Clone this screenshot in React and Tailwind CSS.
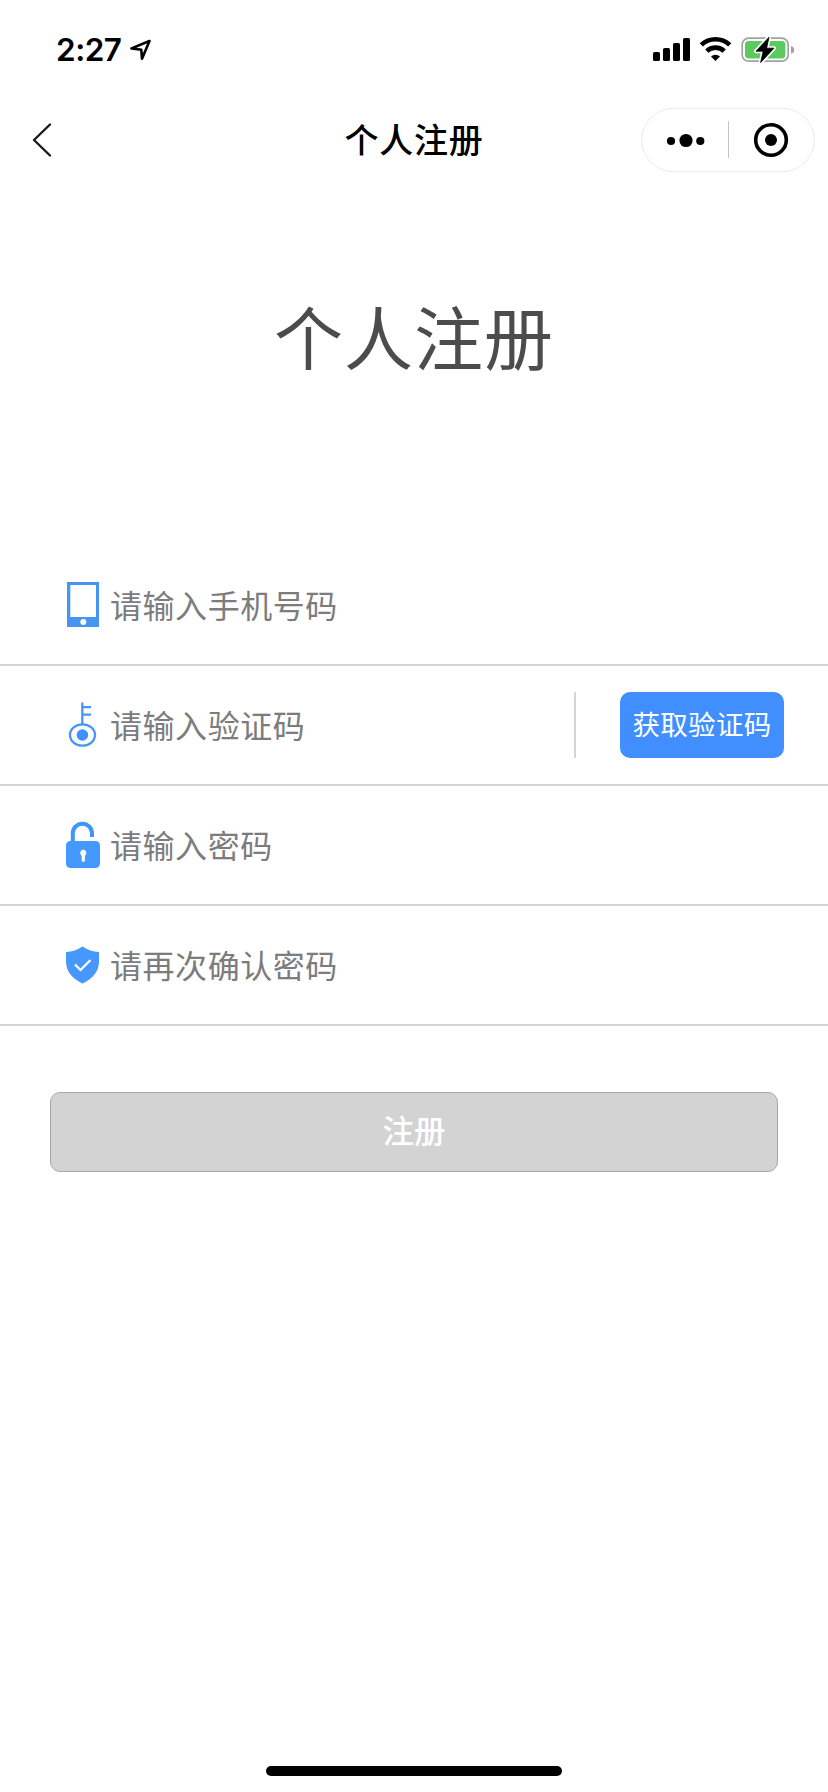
function StatusBar() {
  return (
    <div className="flex h-[100px] items-center justify-between pl-14 pr-[33px]">
      <div className="flex items-center gap-[9px]">
        <span className="font-['Inter',sans-serif] text-[31.5px] leading-[38px] font-semibold tracking-[-0.5px]">2:27</span>
        <svg className="h-[22px] w-[22px]" viewBox="0 0 22 22" fill="none" stroke="#000" strokeWidth="2.6" strokeLinejoin="round">
          <path d="M19.5 2 1.5 9.4 11.3 10.8 12 19.7Z" />
        </svg>
      </div>
      <svg className="h-[28px] w-[142px]" viewBox="0 0 142 28">
        <rect x="0" y="16" width="7" height="9" rx="1.6" />
        <rect x="10" y="12" width="7" height="13" rx="1.6" />
        <rect x="20" y="7" width="7" height="18" rx="1.6" />
        <rect x="30" y="2" width="7" height="23" rx="1.6" />
        <g fill="none" stroke="#000" strokeWidth="4.6">
          <path d="M48.3 8.9a20.6 20.6 0 0 1 28.4 0" />
          <path d="M53.8 15.1a12.6 12.6 0 0 1 17.4 0" />
        </g>
        <path d="M62.5 25 58 20.6a6.6 6.6 0 0 1 9 0Z" />
        <rect x="89.2" y="2.2" width="46" height="23" rx="6.5" fill="none" stroke="#a2a2a5" strokeWidth="1.7" />
        <rect x="92" y="5" width="40.4" height="17.4" rx="3.6" fill="#5bcb60" />
        <path d="M138 10q3.2 1 3.2 3.9t-3.2 3.9Z" fill="#a2a2a5" />
        <path d="M116 1.2 103 15.2h7.2L107.6 26.6 121 12.2h-7.4Z" stroke="#fff" strokeWidth="4" strokeLinejoin="round" fill="#fff" />
        <path d="M116 1.2 103 15.2h7.2L107.6 26.6 121 12.2h-7.4Z" stroke="#000" strokeWidth="0.8" strokeLinejoin="round" />
      </svg>
    </div>
  );
}

function NavBar() {
  return (
    <header className="grid h-20 grid-cols-[187px_1fr_187px] items-center">
      <svg className="ml-8 h-9 w-5" viewBox="0 0 20 36" fill="none" stroke="#1a1a1a" strokeWidth="2.4" strokeLinecap="round" strokeLinejoin="round">
        <path d="M18 2.5 2 18 18 33.5" />
      </svg>
      <h1 className="mb-0.5 text-center text-[34px] leading-[48px] font-medium tracking-[0.7px]">个人注册</h1>
      <div className="flex h-16 w-[174px] items-center rounded-full border border-[#ebebeb]">
        <svg className="h-[62px] w-[172px]" viewBox="0 0 172 62">
          <circle cx="29" cy="32" r="4.1" />
          <circle cx="44" cy="31.5" r="6.6" />
          <circle cx="58.3" cy="32" r="4.1" />
          <path d="M86.5 12V49" stroke="#c4c4c4" strokeWidth="1" />
          <circle cx="129" cy="31" r="15.3" fill="none" stroke="#000" strokeWidth="3.6" />
          <circle cx="129" cy="31" r="6" />
        </svg>
      </div>
    </header>
  );
}

function PhoneIcon() {
  return (
    <svg className="mb-0.5 h-12 w-9" viewBox="0 0 36 48">
      <path d="M2 2H34V47H2ZM5.3 5V37H31V5Z" fill="#4695f2" fillRule="evenodd" />
      <circle cx="18.3" cy="42" r="3" fill="#fff" />
    </svg>
  );
}

function KeyIcon() {
  return (
    <svg className="mb-0.5 h-12 w-9" viewBox="0 0 36 48" fill="none" stroke="#4896f6" strokeWidth="2.3">
      <path d="M17.3 2.5V24M17.3 7.2H26M17.3 14.7H26" />
      <ellipse cx="17.5" cy="35" rx="12.5" ry="10.7" />
      <circle cx="17.4" cy="35" r="5.8" fill="#3f91fb" stroke="none" />
    </svg>
  );
}

function LockIcon() {
  return (
    <svg className="mb-0.5 h-12 w-9" viewBox="0 0 36 48">
      <path d="M7.8 24V13.3a9.6 9.6 0 0 1 19.2 0V17" fill="none" stroke="#4096f8" strokeWidth="4" />
      <rect x="1" y="21" width="34" height="27" rx="4.5" fill="#4499fe" />
      <path d="M18 29.5a3.6 3.6 0 0 1 1.9 6.5V40.2a1.6 1.6 0 0 1-3.2 0V36A3.6 3.6 0 0 1 18 29.5Z" fill="#fff" />
    </svg>
  );
}

function ShieldIcon() {
  return (
    <svg className="mb-0.5 h-12 w-9" viewBox="0 0 36 48">
      <path d="M17.5 6.5Q25 11.5 34 12V22Q33.5 36 17.5 43.5 1.5 36 1 22V12Q10 11.5 17.5 6.5Z" fill="#4798fd" />
      <path d="M10 24.5 15.5 30 25.5 20" fill="none" stroke="#fff" strokeWidth="2.2" />
    </svg>
  );
}

function Field({ icon, label, children }) {
  return (
    <div className="flex h-[120px] items-center border-b-2 border-[#d5d5d5] pl-[65px] pr-11">
      {icon}
      <span className="mb-[3px] ml-[9px] text-[32px] leading-[46px] tracking-[0.55px] text-[#7c7c7c]">{label}</span>
      {children}
    </div>
  );
}

export default function App() {
  return (
    <div className="flex h-[1792px] w-[828px] flex-col bg-white font-['Noto_Sans_CJK_SC',sans-serif] text-black">
      <StatusBar />
      <NavBar />
      <main className="flex flex-col">
        <h2 className="mt-[105px] text-center text-[69px] leading-[100px] tracking-[1px] text-[#4c4c4c]">个人注册</h2>
        <div className="mt-[161px]">
          <Field icon={<PhoneIcon />} label="请输入手机号码" />
          <Field icon={<KeyIcon />} label="请输入验证码">
            <div className="ml-auto flex items-center gap-11">
              <div className="h-[66px] w-0.5 bg-[#d5d5d5]" />
              <button className="h-[66px] w-[164px] rounded-[10px] bg-[#418fff] pb-1 text-[27.5px] leading-[62px] tracking-[0.3px] text-white">获取验证码</button>
            </div>
          </Field>
          <Field icon={<LockIcon />} label="请输入密码" />
          <Field icon={<ShieldIcon />} label="请再次确认密码" />
        </div>
        <button className="mx-[50px] mt-[66px] h-20 rounded-[10px] border border-[#a8a8a8] bg-[#d3d3d3] pb-1 text-[31.5px] font-medium text-white">注册</button>
      </main>
      <div className="mx-auto mt-auto mb-4 h-2.5 w-[296px] rounded-full bg-black" />
    </div>
  );
}
